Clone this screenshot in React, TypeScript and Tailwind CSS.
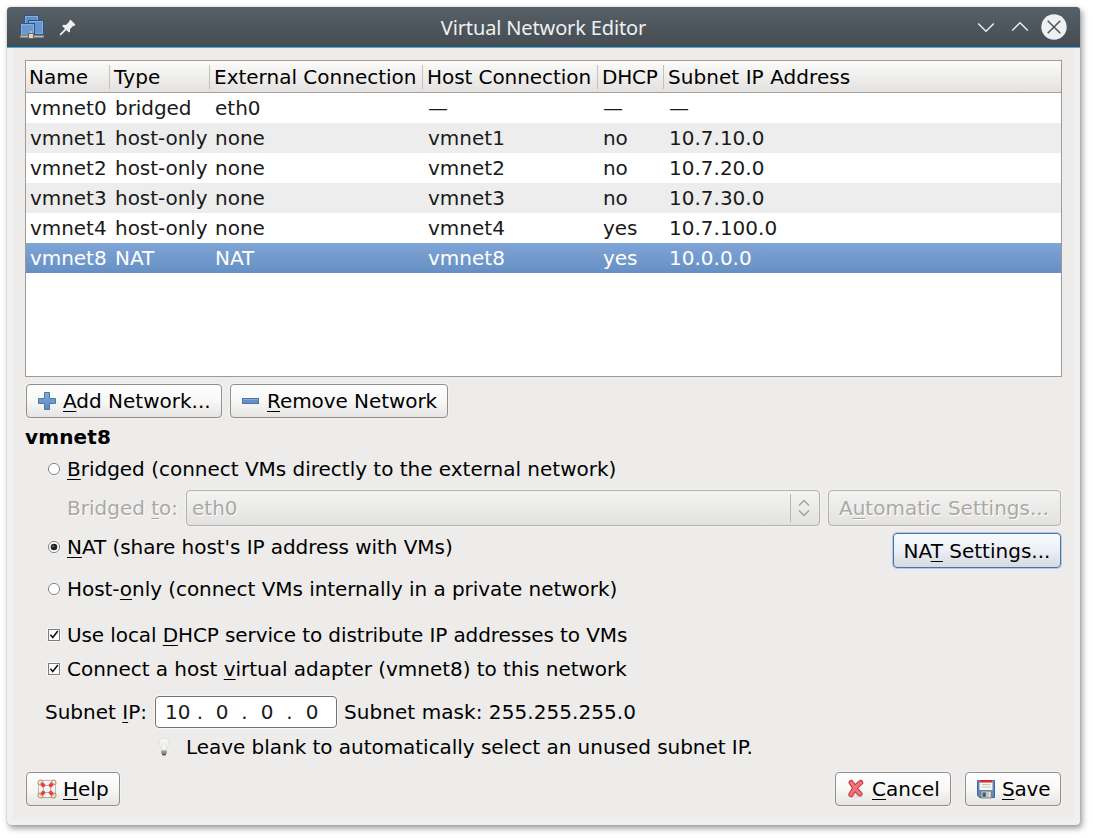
import type { ReactNode } from "react";

type Network = {
  name: string;
  type: string;
  external: string;
  host: string;
  dhcp: string;
  subnet: string;
};

const networks: Network[] = [
  { name: "vmnet0", type: "bridged", external: "eth0", host: "—", dhcp: "—", subnet: "—" },
  { name: "vmnet1", type: "host-only", external: "none", host: "vmnet1", dhcp: "no", subnet: "10.7.10.0" },
  { name: "vmnet2", type: "host-only", external: "none", host: "vmnet2", dhcp: "no", subnet: "10.7.20.0" },
  { name: "vmnet3", type: "host-only", external: "none", host: "vmnet3", dhcp: "no", subnet: "10.7.30.0" },
  { name: "vmnet4", type: "host-only", external: "none", host: "vmnet4", dhcp: "yes", subnet: "10.7.100.0" },
  { name: "vmnet8", type: "NAT", external: "NAT", host: "vmnet8", dhcp: "yes", subnet: "10.0.0.0" },
];

const headings = [
  { label: "Name", tracking: "" },
  { label: "Type", tracking: "tracking-[0.1px]" },
  { label: "External Connection", tracking: "" },
  { label: "Host Connection", tracking: "tracking-[-0.07px]" },
  { label: "DHCP", tracking: "tracking-[-0.2px]" },
  { label: "Subnet IP Address", tracking: "tracking-[0.06px]" },
];
const columns = "grid grid-cols-[84px_100px_213px_175px_66px_1fr]";

/* Mnemonic letter of a label */
function Key({ children }: { children: string }) {
  return <span className="underline decoration-1 underline-offset-[3px]">{children}</span>;
}

function Button({ className = "", icon, children }: { className?: string; icon?: ReactNode; children: ReactNode }) {
  return (
    <button
      className={`flex h-[34px] shrink-0 items-center rounded-[4px] border border-[#918e8c] bg-linear-to-b from-white via-[#f8f8f7] to-[#e6e5e4] pl-[10px] whitespace-nowrap shadow-[0_0_0_1px_#f3f2f1] ${className}`}
    >
      {icon}
      <span>{children}</span>
    </button>
  );
}

function Radio({ checked = false }: { checked?: boolean }) {
  return (
    <svg className="mr-[6px] shrink-0" width="14" height="14" viewBox="0 0 14 14">
      <circle cx="7" cy="7" r="6.6" fill="#f8f8f7" />
      <circle cx="7" cy="7" r="5.6" fill="#fff" stroke="#858280" />
      {checked && <circle cx="7" cy="7" r="3.3" fill="#222" />}
      {checked && <circle cx="6.2" cy="6.2" r="1" fill="#777" />}
    </svg>
  );
}

function Checkbox() {
  return (
    <svg className="mr-[6px] shrink-0" width="14" height="14" viewBox="0 0 14 14">
      <rect x="0" y="0" width="14" height="14" rx="1" fill="#f8f8f7" />
      <rect x="1.5" y="1.5" width="11" height="11" fill="#fff" stroke="#7d7a78" />
      <path d="M3.4 6.8 5.8 9.6 10.8 3" fill="none" stroke="#111" strokeWidth="1.6" />
    </svg>
  );
}

function NetworkIcon() {
  return (
    <svg width="26" height="26" viewBox="0 0 26 26">
      <g stroke="#2a5791" strokeWidth="1">
        <rect x="5.5" y="1.5" width="14" height="14" fill="#5f8fc6" />
        <rect x="9.5" y="6.5" width="15" height="14" fill="#6796cc" />
        <rect x="1.5" y="9.5" width="14" height="12" fill="#6c99cd" />
      </g>
      <g fill="none" stroke="#86aeda" strokeWidth="1">
        <path d="M6.5 9V2.5h12V6M10.5 9V7.5h13v12h-7M2.5 21V10.5h12V20" />
      </g>
      <rect x="1" y="21" width="24" height="3" fill="#83847e" />
      <rect x="2" y="22" width="22" height="1" fill="#b9b9b3" />
      <path d="M12 17v4" stroke="#d0d0c8" strokeWidth="1.5" />
      <rect x="9.5" y="19.5" width="5" height="5" fill="#d8d7cb" stroke="#66665d" />
    </svg>
  );
}

function PinIcon() {
  return (
    <svg width="17" height="17" viewBox="0 0 17 17">
      <path
        d="M11.6.8 16.4 5.4 15 7.2 13.9 7 10.9 10.2 11.2 12.4 10 13.6 7.3 10.9 2 16.2H.8V15L6 9.7 3.2 6.9 4.4 5.7 6.9 6 10 3V1.9z"
        fill="#eff0f1"
      />
    </svg>
  );
}

function PlusIcon() {
  return (
    <svg className="mr-[6px]" width="20" height="20" viewBox="0 0 20 20">
      <defs>
        <linearGradient id="plus" x2="0" y2="1">
          <stop stopColor="#83a9d7" />
          <stop offset="1" stopColor="#5c88bf" />
        </linearGradient>
      </defs>
      <path d="M7.5 1.5h5v6h6v5h-6v6h-5v-6h-6v-5h6z" fill="url(#plus)" stroke="#4976ad" />
    </svg>
  );
}

function MinusIcon() {
  return (
    <svg className="mr-[6px]" width="20" height="20" viewBox="0 0 20 20">
      <rect x="1.5" y="7.5" width="16" height="5" fill="#668fc3" stroke="#4976ad" />
      <path d="M2 8.5h15" stroke="#86a9d4" />
    </svg>
  );
}

function HelpIcon() {
  return (
    <svg className="mr-[6px]" width="20" height="20" viewBox="0 0 20 20">
      <g fill="none" stroke="#c9a068" strokeWidth="1.3">
        <circle cx="3.8" cy="3.8" r="2.7" />
        <circle cx="16.2" cy="3.8" r="2.7" />
        <circle cx="3.8" cy="16.2" r="2.7" />
        <circle cx="16.2" cy="16.2" r="2.7" />
      </g>
      <circle cx="10" cy="10" r="6.2" fill="none" stroke="#9a9a97" strokeWidth="6" />
      <circle cx="10" cy="10" r="6.2" fill="none" stroke="#f6f6f5" strokeWidth="4.6" />
      <g stroke="#ee3b3b" strokeWidth="3.8">
        <path d="M4.4 4.4 7.3 7.3M15.6 4.4 12.7 7.3M4.4 15.6 7.3 12.7M15.6 15.6 12.7 12.7" />
      </g>
    </svg>
  );
}

function CancelIcon() {
  return (
    <svg className="mr-[6px]" width="20" height="20" viewBox="0 0 20 20">
      <ellipse cx="9" cy="17.2" rx="8" ry="1.7" fill="#e3e3e1" />
      <g fill="none" strokeLinecap="round" strokeLinejoin="round">
        <path d="M5.2 3.6C7.6 6.5 9.8 11.5 14 14.9M14.6 3.6C10.5 6.5 7.6 10.5 5 15.5" stroke="#c3343a" strokeWidth="5.2" />
        <path d="M5.2 3.6C7.6 6.5 9.8 11.5 14 14.9M14.6 3.6C10.5 6.5 7.6 10.5 5 15.5" stroke="#f37579" strokeWidth="3.2" />
      </g>
    </svg>
  );
}

function SaveIcon() {
  return (
    <svg className="mr-[6px]" width="20" height="20" viewBox="0 0 20 20">
      <path d="M1.5 1.5h17v17h-15l-2-2z" fill="#5f89c1" stroke="#3c669c" />
      <rect x="3.5" y="1" width="13" height="10" fill="#f5f5f4" />
      <rect x="3.5" y="1" width="13" height="2.5" fill="#d32a31" />
      <path d="M5.5 5.5h9M5.5 8h9" stroke="#c4c4c2" />
      <rect x="5" y="12" width="10.5" height="7" fill="#c3c4c0" stroke="#777975" strokeWidth=".8" />
      <rect x="6.7" y="13.5" width="3" height="4.3" fill="#345684" />
      <path d="M13.5 13v5" stroke="#e4e5e1" />
    </svg>
  );
}

function BulbIcon() {
  return (
    <svg width="14" height="20" viewBox="0 0 14 20">
      <path d="M7 1C3.8 1 2 3 2 5.7c0 2.7 2 4.3 2.5 8h5c.5-3.7 2.5-5.3 2.5-8C12 3 10.2 1 7 1z" fill="#f4f4f2" stroke="#d9d9d6" strokeWidth=".7" />
      <path d="M5.5 13 4.5 7h5l-1 6" fill="none" stroke="#e4e4d9" strokeWidth=".8" />
      <path d="M4 6.5h6" stroke="#f2f0cc" strokeWidth="1.4" />
      <rect x="4.4" y="13.6" width="5.2" height="3.4" fill="#83857c" />
      <path d="M4.5 14.8h5" stroke="#a3a59b" />
      <path d="M5.2 17h3.6v1.4H5.2z" fill="#4b4c47" />
    </svg>
  );
}

function TitleBar() {
  return (
    <header className="grid h-[41px] shrink-0 grid-cols-[1fr_auto_1fr] items-center rounded-t-[4px] border-b border-[#3daee9] bg-linear-to-b from-[#566068] to-[#454c52] text-[#eff0f1]">
      <div className="flex items-center gap-[14px] pl-3">
        <NetworkIcon />
        <PinIcon />
      </div>
      <h1 className="pt-px font-['Noto_Sans',sans-serif] text-[20px] leading-none font-normal tracking-[-0.14px]">
        Virtual Network Editor
      </h1>
      <div className="flex items-center justify-end pr-[13px]">
        <svg className="mr-[16px]" width="18" height="12" viewBox="0 0 18 12" fill="none" stroke="#eff0f1" strokeWidth="1.4">
          <path d="m1.2 2.4 7.8 7.8 7.8-7.8" />
        </svg>
        <svg className="mr-[12px]" width="18" height="12" viewBox="0 0 18 12" fill="none" stroke="#eff0f1" strokeWidth="1.4">
          <path d="m1.2 9.6 7.8-7.8 7.8 7.8" />
        </svg>
        <svg width="26" height="26" viewBox="0 0 26 26">
          <circle cx="13" cy="13" r="12.7" fill="#eff0f1" />
          <path d="m6.7 6.7 12.6 12.6M19.3 6.7 6.7 19.3" stroke="#4d555c" strokeWidth="1.5" />
        </svg>
      </div>
    </header>
  );
}

function NetworkTable() {
  return (
    <section className="flex h-[317px] shrink-0 flex-col border border-[#9d9a98] bg-white text-[#1a1a1a]">
      <div className={`${columns} h-8 shrink-0 items-center border-b border-[#a3a09e] bg-linear-to-b from-[#fbfbfa] to-[#e3e2e1] text-black`}>
        {headings.map(({ label, tracking }, i) => (
          <div
            key={label}
            className={`flex h-6 items-center pl-[3px] leading-none whitespace-nowrap not-first:pl-1 ${tracking} ${
              i < headings.length - 1 ? "border-r border-[#c3c1bf]" : ""
            }`}
          >
            {label}
          </div>
        ))}
      </div>
      {networks.map((n, i) => (
        <div
          key={n.name}
          className={`${columns} h-[30px] shrink-0 items-center leading-none whitespace-nowrap ${
            n.name === "vmnet8" ? "bg-linear-to-b from-[#80a5d7] to-[#658fc3] text-white" : i % 2 ? "bg-[#ededed]" : "bg-white"
          }`}
        >
          <span className="pl-[4px] tracking-[-0.05px]">{n.name}</span>
          <span className="pl-[5px] tracking-[-0.05px]">{n.type}</span>
          <span className="pl-[5px]">{n.external}</span>
          <span className="pl-[5px]">{n.host}</span>
          <span className="pl-[5px] tracking-[-0.1px]">{n.dhcp}</span>
          <span className="pl-[5px]">{n.subnet}</span>
        </div>
      ))}
    </section>
  );
}

export default function App() {
  return (
    <div className="h-[838px] w-[1093px] overflow-hidden bg-white pt-[7px] pl-[7px] font-['DejaVu_Sans',sans-serif] text-[20px] leading-none text-black">
      <div className="flex h-[818px] w-[1073px] flex-col rounded-[4px] bg-[#eff0f1] shadow-[0_0_1px_#888,2px_3px_6px_rgba(0,0,0,0.42)]">
        <TitleBar />
        <main className="mx-[6px] mb-[6px] flex flex-1 flex-col bg-[#edecea] pt-3 pr-3 pl-3">
          <NetworkTable />

          <div className="mt-[7px] flex gap-2 pl-px">
            <Button className="w-[196px]" icon={<PlusIcon />}>
              <Key>A</Key>dd Network...
            </Button>
            <Button className="w-[218px] tracking-[-0.07px]" icon={<MinusIcon />}>
              <Key>R</Key>emove Network
            </Button>
          </div>

          <h2 className="flex h-[38px] items-center font-bold tracking-[0.15px]">vmnet8</h2>

          <label className="flex h-[26px] items-center pl-[22px]">
            <Radio />
            <span className="tracking-[-0.015px]">
              <Key>B</Key>ridged (connect VMs directly to the external network)
            </span>
          </label>

          <div className="mt-2 flex h-9 items-center pr-px pl-[42px] text-[#aaa8a6] [text-shadow:1px_1px_0_#fff]">
            <span className="w-[119px]">
              Bridged <Key>t</Key>o:
            </span>
            <div className="flex h-9 w-[634px] items-center rounded-[4px] border border-[#b3b1af] bg-linear-to-b from-[#f3f3f2] to-[#e3e2e0] pl-[5px] shadow-[0_0_0_1px_#f3f2f1]">
              <span className="flex-1">eth0</span>
              <div className="flex h-7 w-[29px] items-center border-l border-[#b8b6b4] pl-[7px]">
                <svg width="12" height="18" viewBox="0 0 12 18" fill="none" stroke="#a19f9d" strokeWidth="1.4">
                  <path d="m1 6.5 5-5 5 5M1 11.5l5 5 5-5" />
                </svg>
              </div>
            </div>
            <button className="ml-2 h-9 flex-1 rounded-[4px] border border-[#b3b1af] bg-linear-to-b from-[#f3f3f2] to-[#e3e2e0] pr-px whitespace-nowrap shadow-[0_0_0_1px_#f3f2f1] [text-shadow:1px_1px_0_#fff]">
              A<Key>u</Key>tomatic Settings...
            </button>
          </div>

          <div className="mt-[7px] flex h-[35px] justify-between pr-px pl-[22px]">
            <label className="flex h-[28px] items-center">
              <Radio checked />
              <span className="tracking-[-0.06px]">
                <Key>N</Key>AT (share host's IP address with VMs)
              </span>
            </label>
            <button className="h-[35px] w-[168px] rounded-[4px] border border-[#4b73a9] bg-linear-to-b from-[#f8faff] via-[#eceff5] to-[#d5dae0] whitespace-nowrap shadow-[0_0_0_1px_#b5c9e3]">
              NA<Key>T</Key> Settings...
            </button>
          </div>

          <label className="mt-2 flex h-[26px] items-center pl-[22px]">
            <Radio />
            <span className="tracking-[-0.055px]">
              Host-<Key>o</Key>nly (connect VMs internally in a private network)
            </span>
          </label>

          <label className="mt-5 flex h-[26px] items-center pl-[22px]">
            <Checkbox />
            <span className="tracking-[-0.1px]">
              Use local <Key>D</Key>HCP service to distribute IP addresses to VMs
            </span>
          </label>
          <label className="mt-2 flex h-[26px] items-center pl-[22px]">
            <Checkbox />
            <span className="tracking-[-0.03px]">
              Connect a host <Key>v</Key>irtual adapter (vmnet8) to this network
            </span>
          </label>

          <div className="mt-[14px] flex h-8 items-center pl-[20px]">
            <span className="w-[110px]">
              Subnet <Key>I</Key>P:
            </span>
            <div className="grid h-8 w-[182px] grid-cols-[24px_22px_22px_23px_22px_23px_22px] items-center rounded-[4px] border border-[#72706e] bg-white pl-[9px] text-center text-[#1a1a1a] shadow-[0_0_0_1px_#f8f8f7]">
              <span>10</span>
              <span>.</span>
              <span>0</span>
              <span>.</span>
              <span>0</span>
              <span>.</span>
              <span>0</span>
            </div>
            <span className="ml-[7px] tracking-[0.06px]">Subnet mask: 255.255.255.0</span>
          </div>

          <div className="mt-[6px] flex h-[26px] items-center pl-[132px]">
            <BulbIcon />
            <span className="ml-[15px] tracking-[-0.04px]">Leave blank to automatically select an unused subnet IP.</span>
          </div>

          <footer className="mt-3 flex pr-px pl-px">
            <Button className="w-[94px]" icon={<HelpIcon />}>
              <Key>H</Key>elp
            </Button>
            <Button className="ml-auto w-[116px]" icon={<CancelIcon />}>
              <Key>C</Key>ancel
            </Button>
            <Button className="ml-[14px] w-[96px] tracking-[-0.2px]" icon={<SaveIcon />}>
              <Key>S</Key>ave
            </Button>
          </footer>
        </main>
      </div>
    </div>
  );
}
